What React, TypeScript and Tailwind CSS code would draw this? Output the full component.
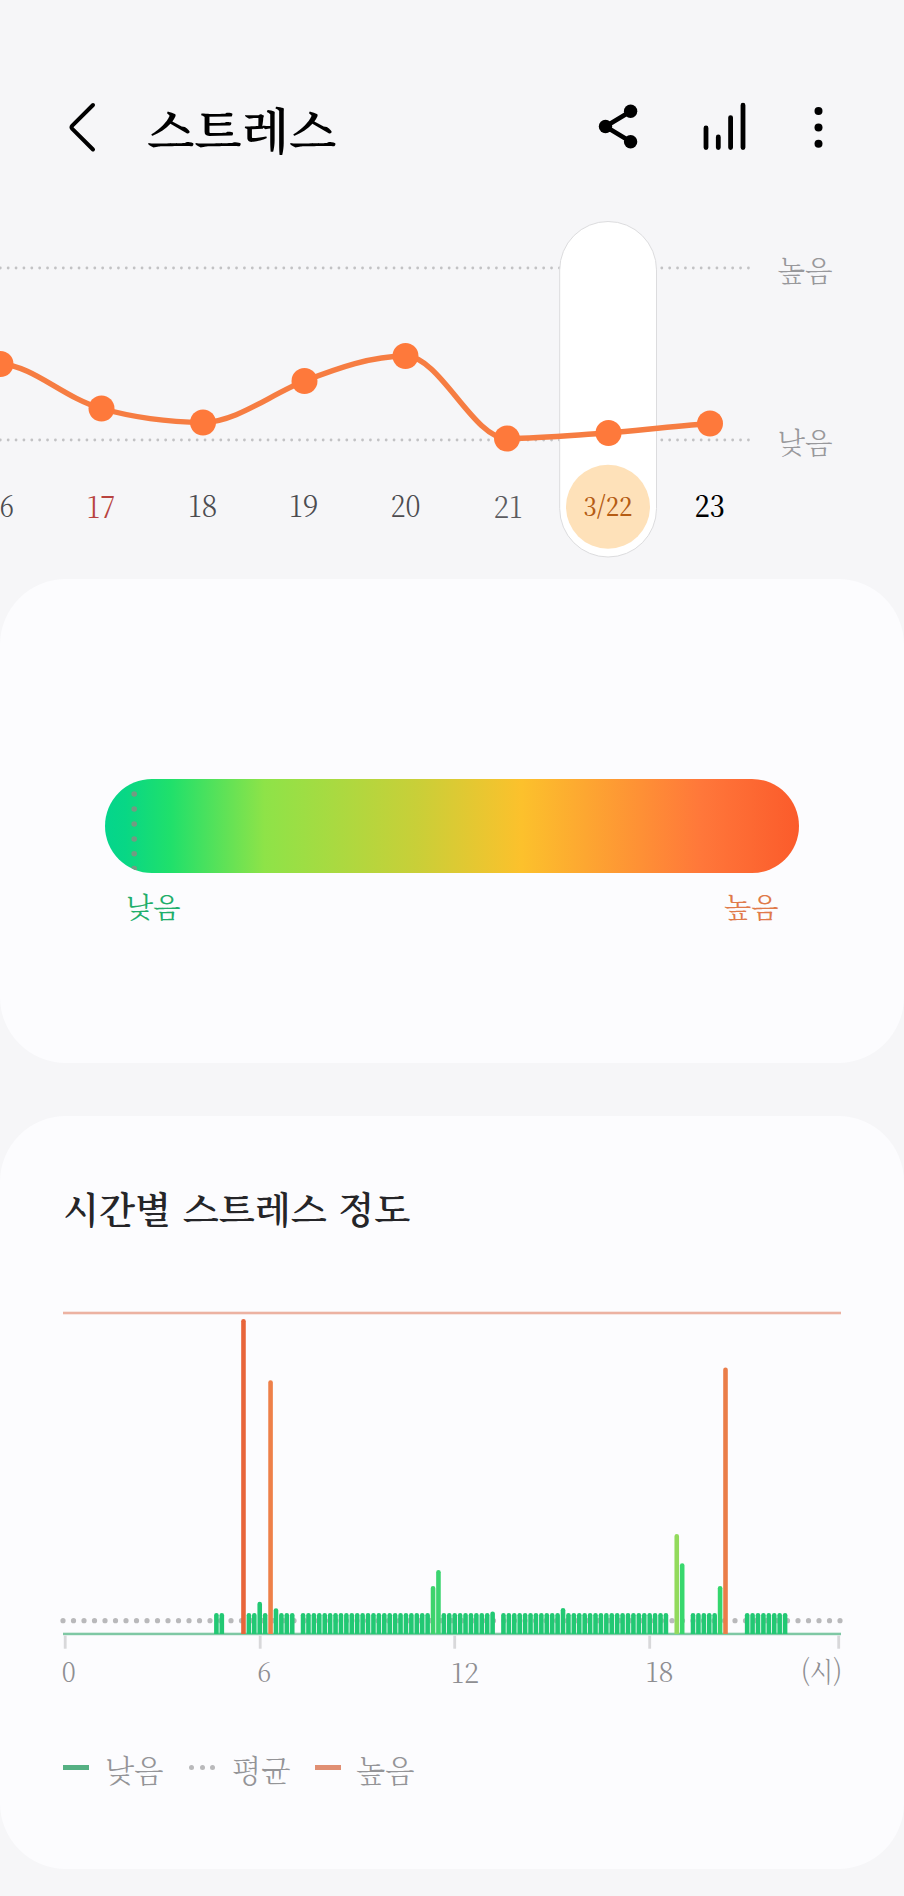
const SERIF =
  "font-['Noto_Serif_CJK_KR','Liberation_Serif','Noto_Sans_CJK_KR',serif]";

type Label = {
  x: number;
  y: number;
  text: string;
  width: number;
  size: number;
  className: string;
};

function AxisLabel({ x, y, text, width, size, className }: Label) {
  return (
    <text
      x={x}
      y={y}
      fontSize={size}
      textLength={width}
      lengthAdjust="spacingAndGlyphs"
      className={className}
    >
      {text}
    </text>
  );
}

function Header() {
  return (
    <header className="flex h-[214px] items-start pt-[96px]">
      <button aria-label="뒤로" className="ml-[62px] h-[64px] w-[40px]">
        <svg width="40" height="64" viewBox="0 0 40 64" fill="none">
          <path
            d="M31 9 L10.3 29.7 Q8.8 31.3 10.3 32.9 L31 53.5"
            stroke="#000"
            strokeWidth="4"
            strokeLinecap="round"
            strokeLinejoin="round"
          />
        </svg>
      </button>
      <h1 className="ml-[45px] flex h-[65px] w-[400px] items-center text-[49px] leading-none font-semibold text-black">
        스트레스
      </h1>
      <div className="flex h-[64px] items-center">
        <button aria-label="공유" className="ml-[51px]">
          <svg width="42" height="64" viewBox="0 0 42 64" className="block">
            <path
              d="M32.8 15.2 L7.5 30.5 L32.8 45.7"
              fill="none"
              stroke="#000"
              strokeWidth="4.6"
            />
            <circle cx="32.6" cy="15.2" r="6.7" />
            <circle cx="7.5" cy="30.5" r="6.7" />
            <circle cx="32.6" cy="45.7" r="6.7" />
          </svg>
        </button>
        <button aria-label="통계" className="ml-[58px]">
          <svg
            width="50"
            height="64"
            viewBox="0 0 50 64"
            stroke="#000"
            strokeWidth="4.8"
            strokeLinecap="round"
            className="block"
          >
            <path d="M8 32V51.6M20.3 41V51.6M32.6 21.6V51.6M45 9.2V51.6" />
          </svg>
        </button>
        <button aria-label="더보기" className="ml-[61px]">
          <svg width="30" height="64" viewBox="0 0 30 64" className="block">
            <circle cx="9.5" cy="15.1" r="4" />
            <circle cx="9.5" cy="31.4" r="4" />
            <circle cx="9.5" cy="47.8" r="4" />
          </svg>
        </button>
      </div>
    </header>
  );
}

const points: [number, number][] = [
  [0.5, 364],
  [101.5, 408.5],
  [203, 422.5],
  [304.5, 381],
  [405.5, 356],
  [507, 438.5],
  [608.5, 433],
  [710, 423.5],
];

const days: Label[] = [
  { x: -0.5, y: 517, text: "6", width: 14.5, size: 30, className: "fill-[#4c4c50] font-light" },
  { x: 86.5, y: 517.5, text: "17", width: 29, size: 30, className: "fill-[#b8433f] font-light" },
  { x: 188, y: 517, text: "18", width: 29.5, size: 30, className: "fill-[#4c4c50] font-light" },
  { x: 289, y: 517, text: "19", width: 29.5, size: 30, className: "fill-[#4c4c50] font-light" },
  { x: 390.5, y: 517, text: "20", width: 30, size: 30, className: "fill-[#4c4c50] font-light" },
  { x: 493.5, y: 518, text: "21", width: 29, size: 30, className: "fill-[#5c5c60] font-light" },
  { x: 583.5, y: 516, text: "3/22", width: 49, size: 25.5, className: "fill-[#b55c14] font-medium" },
  { x: 694.5, y: 517, text: "23", width: 30.5, size: 30, className: "fill-black font-medium" },
];

function DottedRow({ y }: { y: number }) {
  return (
    <g fill="#c2c2c4">
      {Array.from({ length: 96 }, (_, i) => (
        <circle key={i} cx={0.3 + i * 7.875} cy={y} r="1.4" />
      ))}
    </g>
  );
}

function TrendChart() {
  return (
    <svg
      width="904"
      height="365"
      viewBox="0 214 904 365"
      className="block shrink-0"
    >
      <DottedRow y={268} />
      <DottedRow y={440} />
      <rect
        x="559.7"
        y="221.5"
        width="96.8"
        height="335.5"
        rx="48.4"
        fill="#fff"
        stroke="#dcdcde"
        strokeWidth="1"
      />
      <circle cx="608" cy="506.7" r="42" fill="#fee1b9" />
      <path
        d="M0.5 364 C34 366 62 397 101.5 408.5 C135 418 169 422 203 422.5 C237 422 271 394 304.5 381 C338 368 372 356 405.5 356 C440 356 473 438.5 507 438.5 C541 438.5 575 435 608.5 433 C642 430 676 426 710 423.5"
        fill="none"
        stroke="#f67d42"
        strokeWidth="5.4"
      />
      {points.map(([x, y]) => (
        <circle key={x} cx={x} cy={y} r="13" fill="#fe793b" />
      ))}
      {days.map((d) => (
        <AxisLabel key={d.text} {...d} />
      ))}
      <AxisLabel x={777.5} y={282} text="높음" width={55} size={29} className="fill-[#98989b] font-light" />
      <AxisLabel x={777.5} y={454} text="낮음" width={55} size={29} className="fill-[#98989b] font-light" />
    </svg>
  );
}

function GaugeCard() {
  return (
    <section className="flex h-[484px] shrink-0 flex-col rounded-[66px] bg-[#fcfcfe] pt-[200px] pr-[105px] pl-[105px]">
      <div className="h-[94px] overflow-hidden rounded-full bg-[linear-gradient(90deg,#04d58c_0%,#08d785_3%,#20e06b_9.5%,#8ee348_23%,#c9cf38_45%,#fcc12c_60%,#ff773a_86%,#fb5b2b_100%)]">
        <svg width="60" height="94" viewBox="0 0 60 94" fill="#749a82">
          {[15, 30, 45, 60, 74.7, 89.5].map((y) => (
            <circle key={y} cx="29.2" cy={y} r="2.8" />
          ))}
        </svg>
      </div>
      <div className="mt-[14px] flex justify-between pr-[20.5px] pl-[21px] text-[28.2px] leading-[38px] font-normal">
        <span className="text-[#1fae6b]">낮음</span>
        <span className="text-[#e07a4a]">높음</span>
      </div>
    </section>
  );
}

type Bar = { slot: number; top: number; color: string };

const GREEN = "#22c873";
const BASE_TOP = 1613;
const peaks: Record<number, [number, string]> = {
  5: [1319, "#e8653a"],
  8: [1601.7, GREEN],
  10: [1380.3, "#ee8049"],
  11: [1608.3, GREEN],
  40: [1586, "#3dd36c"],
  41: [1570, "#3bd470"],
  51: [1611.5, GREEN],
  64: [1608, GREEN],
  85: [1534, "#92da5c"],
  86: [1563.3, "#38d86e"],
  93: [1586, "#35d66d"],
  94: [1367.5, "#ea7d49"],
};
const ranges: [number, number][] = [
  [0, 1],
  [5, 14],
  [16, 51],
  [53, 83],
  [85, 86],
  [88, 94],
  [98, 105],
];
const bars: Bar[] = ranges.flatMap(([from, to]) =>
  Array.from({ length: to - from + 1 }, (_, i) => {
    const slot = from + i;
    const [top, color] = peaks[slot] ?? [BASE_TOP, GREEN];
    return { slot, top, color };
  }),
);

const barPath = (x: number, top: number) =>
  `M${x - 2.3} 1634V${top + 2.3}a2.3 2.3 0 0 1 4.6 0V1634z`;

function HourlyChart() {
  return (
    <svg
      width="904"
      height="440"
      viewBox="0 1260 904 440"
      className="block shrink-0"
    >
      <rect x="63" y="1311.7" width="778" height="2.6" fill="#ecb2a2" />
      <g fill="#b9b9bb">
        {Array.from({ length: 75 }, (_, i) => (
          <circle key={i} cx={63 + i * 10.5} cy="1620.7" r="2.6" />
        ))}
      </g>
      <rect x="63" y="1632.7" width="778" height="2.5" fill="#7fc8a4" />
      <g fill="#d8d8da">
        {[65.2, 260.2, 454.7, 649.7, 838.7].map((x) => (
          <rect key={x} x={x - 1.4} y="1635.5" width="2.8" height="13.2" />
        ))}
      </g>
      {bars.map((b) => (
        <path key={b.slot} d={barPath(216.4 + b.slot * 5.416, b.top)} fill={b.color} />
      ))}
      <AxisLabel x={61.8} y={1682} text="0" width={14} size={27.5} className="fill-[#8e8e92] font-light" />
      <AxisLabel x={257.2} y={1682} text="6" width={14} size={27.5} className="fill-[#8e8e92] font-light" />
      <AxisLabel x={451} y={1683} text="12" width={28} size={27.5} className="fill-[#8e8e92] font-light" />
      <AxisLabel x={645.5} y={1682} text="18" width={28} size={27.5} className="fill-[#8e8e92] font-light" />
      <AxisLabel x={801} y={1682} text="(시)" width={41} size={27.5} className="fill-[#8e8e92] font-light" />
    </svg>
  );
}

function HourlyCard() {
  return (
    <section className="mt-[53px] flex h-[753px] shrink-0 flex-col rounded-[66px] bg-[#fcfcfe]">
      <h2 className="flex h-[144px] items-end pb-[24px] pl-[63px] text-[37.3px] leading-[56px] font-semibold whitespace-pre text-[#252528]">
        시간별 스트레스 정도
      </h2>
      <HourlyChart />
      <div className="mt-[49px] flex h-[40px] items-center pl-[63px] text-[30.2px] leading-[40px] font-light text-[#949497]">
        <span className="mt-[-3px] h-[5px] w-[26px] bg-[#55b083]" />
        <span className="ml-[16px] w-[84px]">낮음</span>
        <span className="mt-[-3px] flex w-[26px] justify-between">
          <i className="size-[5px] rounded-full bg-[#b9b9bb]" />
          <i className="size-[5px] rounded-full bg-[#b9b9bb]" />
          <i className="size-[5px] rounded-full bg-[#b9b9bb]" />
        </span>
        <span className="ml-[17px] w-[83px]">평균</span>
        <span className="mt-[-3px] h-[5px] w-[26px] bg-[#e08f73]" />
        <span className="ml-[15px]">높음</span>
      </div>
    </section>
  );
}

export default function App() {
  return (
    <main
      lang="ko"
      className={`flex h-[1896px] w-[904px] flex-col overflow-hidden bg-[#f6f6f8] ${SERIF}`}
    >
      <Header />
      <TrendChart />
      <GaugeCard />
      <HourlyCard />
    </main>
  );
}
